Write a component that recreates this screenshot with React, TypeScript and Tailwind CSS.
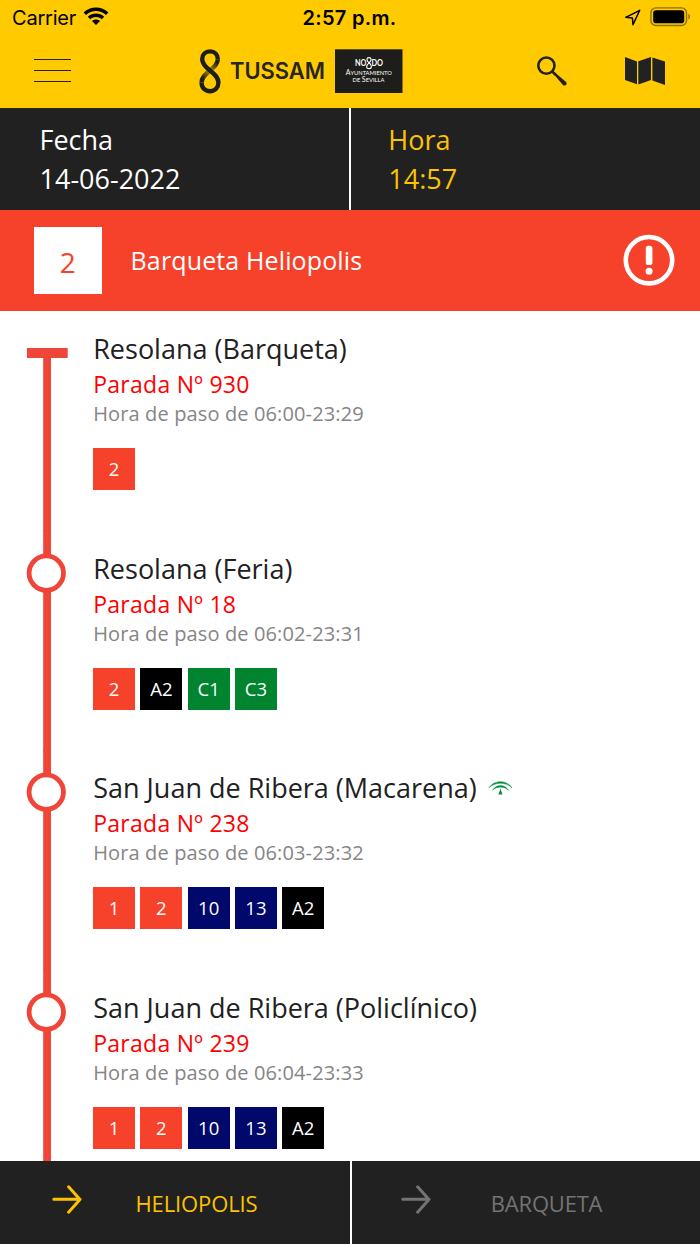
import React from 'react';

type Line = { name: string; color: string };

type Stop = {
  name: string;
  number: number;
  hours: string;
  lines: Line[];
  junta?: boolean;
};

const RED = 'bg-[#f6412b]';
const BLACK = 'bg-black';
const GREEN = 'bg-[#008430]';
const NAVY = 'bg-[#00086b]';

const stops: Stop[] = [
  {
    name: 'Resolana (Barqueta)',
    number: 930,
    hours: '06:00-23:29',
    lines: [{ name: '2', color: RED }],
  },
  {
    name: 'Resolana (Feria)',
    number: 18,
    hours: '06:02-23:31',
    lines: [
      { name: '2', color: RED },
      { name: 'A2', color: BLACK },
      { name: 'C1', color: GREEN },
      { name: 'C3', color: GREEN },
    ],
  },
  {
    name: 'San Juan de Ribera (Macarena)',
    number: 238,
    hours: '06:03-23:32',
    junta: true,
    lines: [
      { name: '1', color: RED },
      { name: '2', color: RED },
      { name: '10', color: NAVY },
      { name: '13', color: NAVY },
      { name: 'A2', color: BLACK },
    ],
  },
  {
    name: 'San Juan de Ribera (Policlínico)',
    number: 239,
    hours: '06:04-23:33',
    lines: [
      { name: '1', color: RED },
      { name: '2', color: RED },
      { name: '10', color: NAVY },
      { name: '13', color: NAVY },
      { name: 'A2', color: BLACK },
    ],
  },
];

function StatusBar() {
  return (
    <div className="grid h-9 grid-cols-3 items-center pl-3 pr-[9px] font-['Inter',sans-serif] text-black">
      <div className="flex items-center gap-2">
        <span className="text-[20px] leading-9 tracking-[-0.2px]">Carrier</span>
        <svg width="26" height="20" viewBox="0 0 26 20" className="-ml-px -mt-1">
          <path d="M0.6 6.6C7.4-0.2 18.6-0.2 25.4 6.6L23 9.1C17.4 3.7 8.6 3.7 3 9.1Z" />
          <path d="M4.8 10.8C9.3 6.5 16.7 6.5 21.2 10.8L18.8 13.2C15.6 10.2 10.4 10.2 7.2 13.2Z" />
          <path d="M9 14.9C11.2 12.9 14.8 12.9 17 14.9L13 19Z" />
        </svg>
      </div>
      <div className="-ml-1 text-center text-[20px] font-semibold leading-9 tracking-[0.3px]">2:57 p.m.</div>
      <div className="-mt-0.5 flex items-center justify-end gap-[9px]">
        <svg width="17" height="17" viewBox="0 0 17 17" fill="none" stroke="black" strokeWidth="1.5" strokeLinejoin="round">
          <path d="M15.7 1.3L1.8 8.3L8.4 8.9L9 15.8Z" />
        </svg>
        <svg width="41" height="20" viewBox="0 0 41 20">
          <rect x="0.9" y="0.9" width="35.6" height="17.6" rx="5" fill="none" stroke="black" strokeOpacity="0.45" strokeWidth="1.4" />
          <rect x="3.2" y="3.2" width="31" height="13" rx="2.8" />
          <path d="M38.4 6.8c2 .8 2 5 0 5.8z" fillOpacity="0.5" />
        </svg>
      </div>
    </div>
  );
}

function TussamLogo() {
  return (
    <svg width="206" height="48" viewBox="198 46 206 48">
      <defs>
        <linearGradient id="fadeUp" gradientUnits="userSpaceOnUse" x1="208" y1="72" x2="217" y2="62">
          <stop offset="0" stopColor="#1d1d1b" stopOpacity="0.25" />
          <stop offset="1" stopColor="#1d1d1b" />
        </linearGradient>
        <linearGradient id="fadeDown" gradientUnits="userSpaceOnUse" x1="212" y1="70" x2="203" y2="79">
          <stop offset="0" stopColor="#1d1d1b" stopOpacity="0.25" />
          <stop offset="1" stopColor="#1d1d1b" />
        </linearGradient>
      </defs>
      <g fill="none" strokeWidth="4.4">
        <path d="M217.8 59.2C217.8 63.5 215 66.5 210 70.5" stroke="url(#fadeUp)" />
        <path d="M210 70.5C204.6 74.8 201.6 77.8 201.6 82.6" stroke="url(#fadeDown)" />
        <path
          d="M217.8 59.3C217.8 54.6 214.6 51.4 210 51.4S202.2 54.6 202.2 59.2C202.2 63.5 205 66.5 210 70.5C215.4 74.8 218.4 77.8 218.4 82.6C218.4 87.6 215 91.2 210 91.2S201.6 87.6 201.6 82.5"
          stroke="#1d1d1b"
        />
      </g>
      <text x="230" y="79.4" textLength="95" lengthAdjust="spacingAndGlyphs" fontFamily="Inter, sans-serif" fontSize="22.6" fontWeight="600" fill="#262520">TUSSAM</text>
      <rect x="335" y="49.3" width="67.5" height="43.7" fill="#1d1d1b" />
      <g fill="#fff" fontFamily="Lato, sans-serif">
        <text x="355" y="66.2" fontSize="9" textLength="11.5" lengthAdjust="spacingAndGlyphs" fontWeight="700">NO</text>
        <text x="371.5" y="66.2" fontSize="9" textLength="11.5" lengthAdjust="spacingAndGlyphs" fontWeight="700">DO</text>
        <text x="345.8" y="75.4" fontSize="7.8" textLength="46" lengthAdjust="spacingAndGlyphs">A<tspan fontSize="6.4">YUNTAMIENTO</tspan></text>
        <text x="352.5" y="82.4" fontSize="6.4" textLength="32" lengthAdjust="spacingAndGlyphs">DE <tspan fontSize="7.8">S</tspan>EVILLA</text>
      </g>
      <path d="M369 62.8C366 60.3 366.4 57.6 369 57.6S372 60.3 369 62.8S365.8 68.6 369 68.6S372.2 65.3 369 62.8Z" fill="none" stroke="#fff" strokeWidth="1.1" />
    </svg>
  );
}

function Header() {
  return (
    <div className="flex h-[72px] items-start pl-[34px] pr-[34px]">
      <div className="mt-[22.6px] flex w-[37px] flex-col gap-[9.8px]">
        <span className="h-[1.4px] bg-[#222]" />
        <span className="h-[1.4px] bg-[#222]" />
        <span className="h-[1.4px] bg-[#222]" />
      </div>
      <div className="ml-[127px] mt-2.5">
        <TussamLogo />
      </div>
      <svg width="32" height="32" viewBox="0 0 32 32" className="ml-[132px] mt-[19px]">
        <circle cx="10.4" cy="10.6" r="8.1" fill="none" stroke="#222" strokeWidth="2.6" />
        <path d="M16.2 16.5L20 20.1" stroke="#222" strokeWidth="2.6" />
        <path d="M18.6 17.2L30.4 27.2C31.2 29.6 29.6 31 27.4 30.4L17.2 18.6Z" fill="#222" />
      </svg>
      <svg width="41" height="30" viewBox="0 0 41 30" className="ml-auto mt-5 shrink-0" fill="#222">
        <path d="M0 1L12 5.4V28.3L0 23.9Z" />
        <path d="M13.3 5.2L26 1V24L13.3 28.6Z" />
        <path d="M27.4 1.4L40 5.6V29L27.4 24.4Z" />
      </svg>
    </div>
  );
}

function JuntaIcon() {
  return (
    <svg width="25" height="16" viewBox="0 0 25 16" fill="#008a3c">
      <path d="M0.8 8C6-0.5 19-0.5 24 8C18.5 1.8 6.5 1.8 0.8 8Z" stroke="#008a3c" strokeWidth="0.4" />
      <path d="M4.2 10.6C8 3.7 17 3.7 20.8 10.6C16.5 6 8.5 6 4.2 10.6Z" stroke="#008a3c" strokeWidth="0.3" />
      <path d="M12.4 8.6L13.4 11.4L14.5 14.6H10.4L11.5 11.4Z" />
    </svg>
  );
}

function Rail({ first }: { first: boolean }) {
  return (
    <svg width="93.2" height="219.65" viewBox="0 0 93.2 219.65" className="block shrink-0 overflow-visible">
      {first ? (
        <path d="M27 37H67.7V47H51V220.5H43.2V47H27Z" fill="#f04539" />
      ) : (
        <>
          <path d="M43.2 -0.5H51V220.5H43.2Z" fill="#f04539" />
          <circle cx="46.3" cy="42.1" r="17.2" fill="#fff" stroke="#f04539" strokeWidth="4.8" />
        </>
      )}
    </svg>
  );
}

function StopRow({ stop, first }: { stop: Stop; first: boolean }) {
  return (
    <div className="flex h-[219.65px] shrink-0">
      <Rail first={first} />
      <div className="pt-5">
        <div className="flex h-9 items-center gap-[11px] whitespace-nowrap text-[27px] leading-9 text-[#212121]">
          <span>{stop.name}</span>
          {stop.junta && <JuntaIcon />}
        </div>
        <div className="h-[34px] whitespace-nowrap text-[23px] leading-[34px] tracking-[0.27px] text-[#ff0000]">Parada Nº {stop.number}</div>
        <div className="h-[26px] whitespace-nowrap text-[20px] leading-[26px] tracking-[0.13px] text-[#858585]">Hora de paso de {stop.hours}</div>
        <div className="-ml-[0.2px] mt-[21px] flex gap-[5.1px]">
          {stop.lines.map((line) => (
            <div key={line.name} className={`flex h-[42.2px] w-[42.2px] items-center justify-center text-[18.5px] text-white ${line.color}`}>
              {line.name}
            </div>
          ))}
        </div>
      </div>
    </div>
  );
}

function Arrow() {
  return (
    <svg width="30" height="30" viewBox="0 0 30 30" fill="none" stroke="currentColor" strokeWidth="3" strokeLinecap="round" strokeLinejoin="round">
      <path d="M1.8 14.2H28M16.6 1.8L28 14.6L16.6 27.2" />
    </svg>
  );
}

export default function App() {
  return (
    <div className="flex h-[1244px] w-[700px] flex-col overflow-hidden bg-white font-['Open_Sans',sans-serif]">
      {/* Top bar */}
      <div className="h-[108.3px] shrink-0 bg-[#ffcb00]">
        <StatusBar />
        <Header />
      </div>

      {/* Date and time */}
      <div className="flex h-[101.4px] shrink-0 bg-[#212121] text-[27px] leading-[39px]">
        <div className="w-[349.3px] pl-[39.5px] pt-3 text-white">
          <div>Fecha</div>
          <div>14-06-2022</div>
        </div>
        <div className="w-[1.7px] bg-white" />
        <div className="pl-[37.3px] pt-3 text-[#fdc300]">
          <div>Hora</div>
          <div>14:57</div>
        </div>
      </div>

      {/* Line */}
      <div className="flex h-[101.3px] shrink-0 items-center bg-[#f6412b] pl-[34px] pr-[25px] text-white">
        <div className="flex h-[67.6px] w-[67.6px] items-center justify-center bg-white text-[28px] text-[#f6412b]">
          <span className="pt-1">2</span>
        </div>
        <div className="ml-[29px] text-[25px] tracking-[0.13px]">Barqueta Heliopolis</div>
        <svg width="52" height="52" viewBox="0 0 52 52" className="ml-auto">
          <circle cx="26" cy="26.2" r="23.2" fill="none" stroke="#fff" strokeWidth="4.6" />
          <rect x="22.8" y="11.7" width="6.6" height="19.4" rx="2.6" fill="#fff" />
          <circle cx="26.1" cy="37.2" r="3.5" fill="#fff" />
        </svg>
      </div>

      {/* Stops */}
      <div className="flex min-h-0 flex-1 flex-col overflow-hidden">
        {stops.map((stop, i) => (
          <StopRow key={stop.number} stop={stop} first={i === 0} />
        ))}
      </div>

      {/* Directions */}
      <div className="flex h-[83px] shrink-0 bg-[#212121] text-[22px] tracking-[-0.12px]">
        <div className="flex w-[350px] items-start pl-[52px] text-[#fdc300]">
          <div className="mt-6"><Arrow /></div>
          <div className="ml-[53.5px] mt-[26px]">HELIOPOLIS</div>
        </div>
        <div className="w-[1.5px] bg-white" />
        <div className="flex items-start pl-[49.8px] text-[#747474]">
          <div className="mt-6"><Arrow /></div>
          <div className="ml-[59.5px] mt-[26px] tracking-[-0.2px]">BARQUETA</div>
        </div>
      </div>
    </div>
  );
}
